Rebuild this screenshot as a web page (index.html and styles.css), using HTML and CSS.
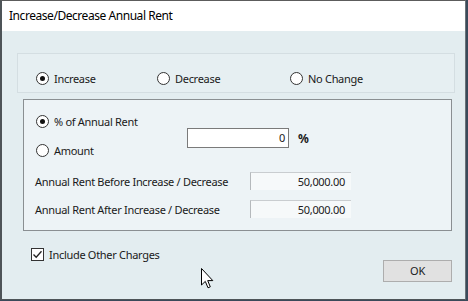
FILE: index.html
```html
<!DOCTYPE html>
<html>
<head>
<meta charset="utf-8">
<link rel="stylesheet" href="styles.css">
</head>
<body>
<div class="window">
  <div class="titlebar">Increase/Decrease Annual Rent</div>
  <div class="client">
    <div class="group1">
      <label class="opt w1"><span class="radio on"></span><span>Increase</span></label>
      <label class="opt w2"><span class="radio"></span><span>Decrease</span></label>
      <label class="opt"><span class="radio"></span><span>No Change</span></label>
    </div>
    <div class="group2">
      <div class="top">
        <div class="radios">
          <label class="opt"><span class="radio on"></span><span>% of Annual Rent</span></label>
          <label class="opt"><span class="radio"></span><span>Amount</span></label>
        </div>
        <div class="amount">
          <div class="input">0</div>
          <span class="pct">%</span>
        </div>
      </div>
      <div class="rows">
        <div class="row"><span class="lbl">Annual Rent Before Increase / Decrease</span><div class="field">50,000.00</div></div>
        <div class="row"><span class="lbl">Annual Rent After Increase / Decrease</span><div class="field">50,000.00</div></div>
      </div>
    </div>
    <div class="footer">
      <label class="opt chk"><span class="checkbox"><svg width="11" height="11" viewBox="0 0 11 11"><path d="M1.5 5.5 L4.2 8.3 L9.5 2.2" fill="none" stroke="#222" stroke-width="1.3"/></svg></span><span>Include Other Charges</span></label>
      <div class="btn">OK</div>
    </div>
    <svg class="cursor" width="14" height="22" viewBox="0 0 14 22"><path d="M0.5 0.5 L0.5 17 L4.3 13.4 L7 19.8 L9.3 18.8 L6.7 12.6 L11.8 12.6 Z" fill="#fff" stroke="#000" stroke-width="1" stroke-linejoin="miter"/></svg>
  </div>
</div>
</body>
</html>
```

FILE: styles.css
```css
* { box-sizing: border-box; }
html, body { margin: 0; padding: 0; }
body {
  width: 468px;
  height: 301px;
  overflow: hidden;
  background: #3a4a5a;
  font-family: "Noto Sans", "Open Sans", sans-serif;
  font-size: 11px;
  letter-spacing: -0.3px;
  color: #1a1a1a;
}
.window {
  width: 466px;
  height: 300px;
  border-top: 1px solid #5c5c5c;
  border-left: 2px solid #4e5458;
  border-right: 1px solid #6a7278;
  border-bottom: 1px solid #4e5458;
  background: #e3edf0;
  display: flex;
  flex-direction: column;
}
.titlebar {
  height: 30px;
  background: #ffffff;
  font-size: 12px;
  letter-spacing: -0.45px;
  padding-left: 7px;
  line-height: 30px;
  color: #000;
  flex: none;
}
.client {
  position: relative;
  flex: 1;
  background: #e3edf0;
  padding-top: 22px;
}
.opt {
  display: flex;
  align-items: center;
  gap: 5px;
  height: 16px;
  white-space: nowrap;
}
.radio {
  width: 13px;
  height: 13px;
  border: 1px solid #333;
  border-radius: 50%;
  background: #fff;
  display: flex;
  align-items: center;
  justify-content: center;
  flex: none;
}
.radio.on::after {
  content: "";
  width: 5px;
  height: 5px;
  border-radius: 50%;
  background: #111;
}
.group1 {
  margin-left: 15px;
  width: 438px;
  height: 40px;
  border: 1px solid #d4dee2;
  background: #e6eff2;
  display: flex;
  padding: 16px 0 0 18px;
}
.w1 { width: 121px; }
.w2 { width: 133px; }
.group2 {
  margin-left: 21px;
  margin-top: 6px;
  width: 429px;
  height: 132px;
  border: 1px solid #8a8f92;
  background: #edf3f6;
  padding: 13px 0 0 12px;
}
.top { display: flex; }
.radios {
  width: 151px;
  display: flex;
  flex-direction: column;
  gap: 13px;
}
.amount {
  margin-top: 15px;
  display: flex;
  align-items: center;
  height: 20px;
}
.input {
  width: 102px;
  height: 20px;
  border: 1px solid #7a7a7a;
  background: #fff;
  text-align: right;
  padding-right: 3px;
  line-height: 18px;
}
.pct {
  font-weight: bold;
  font-size: 12px;
  margin-left: 9px;
  letter-spacing: 0;
}
.rows {
  margin-top: 14px;
  display: flex;
  flex-direction: column;
  gap: 10px;
}
.row {
  display: flex;
  align-items: center;
  height: 18px;
}
.lbl {
  width: 214px;
  margin-left: -1px;
  margin-right: 1px;
}
.field {
  width: 101px;
  height: 18px;
  background: #f6f9fa;
  border-top: 1px solid #c9cdd0;
  border-left: 1px solid #b5b9bc;
  text-align: right;
  padding-right: 6px;
  line-height: 17px;
}
.footer {
  display: flex;
  align-items: flex-start;
  padding-left: 29px;
}
.chk {
  margin-top: 15px;
  gap: 5px;
  width: 352px;
}
.checkbox {
  width: 13px;
  height: 13px;
  border: 1px solid #333;
  background: #fff;
  display: flex;
  align-items: center;
  justify-content: center;
  flex: none;
}
.btn {
  margin-top: 29px;
  width: 69px;
  height: 22px;
  border: 1px solid #adadad;
  background: #e1e1e1;
  text-align: center;
  line-height: 20px;
  font-size: 11px;
}
.cursor {
  position: absolute;
  left: 199px;
  top: 237px;
}
```
